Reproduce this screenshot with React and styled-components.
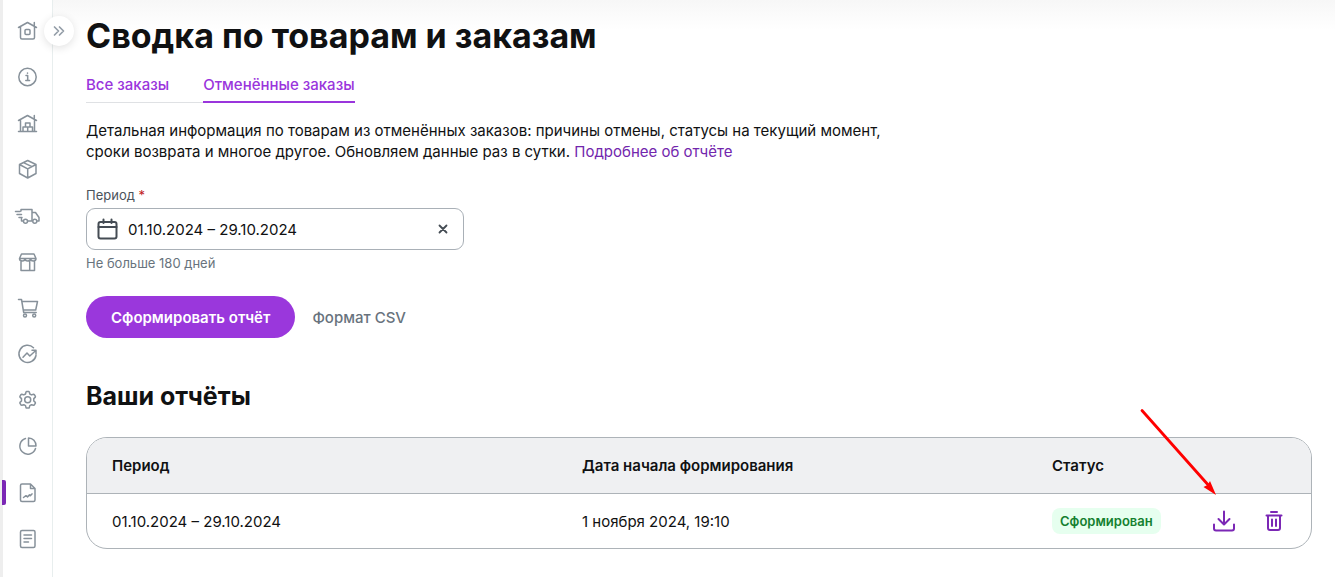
import React, { useState } from "react";
import styled, { createGlobalStyle } from "styled-components";

const GlobalStyle = createGlobalStyle`
  *, *::before, *::after { box-sizing: border-box; }
  body {
    margin: 0;
    background: #fff;
    color: #101112;
    font-family: Inter, "Liberation Sans", sans-serif;
    font-size: 15px;
    font-weight: 400;
    line-height: 21px;
  }
  button, input { font: inherit; color: inherit; }
`;

const Page = styled.div`
  display: flex;
  min-height: 100vh;
`;

const Sidebar = styled.aside`
  position: relative;
  flex: none;
  width: 53px;
  padding-top: 8px;
  border-left: 3px solid #eeeeee;
  border-right: 1px solid #e8eeee;
`;

const NavItem = styled.a`
  position: relative;
  display: flex;
  align-items: center;
  justify-content: center;
  height: 46px;
  color: #87919a;

  &::before {
    content: "";
    display: ${(p) => (p.$active ? "block" : "none")};
    position: absolute;
    left: -1px;
    top: 12px;
    width: 4px;
    height: 25px;
    border-radius: 0 2px 2px 0;
    background: #7b27b5;
  }
`;

const Expand = styled.button`
  position: absolute;
  left: 41px;
  top: 16px;
  display: flex;
  align-items: center;
  justify-content: center;
  width: 30px;
  height: 30px;
  padding: 0;
  border: 0;
  border-radius: 50%;
  background: #fff;
  color: #949ea8;
  box-shadow: 0 2px 8px rgba(0, 0, 0, 0.12);
`;

const Icon = styled.svg`
  flex: none;
  fill: none;
  stroke: currentColor;
  stroke-width: ${(p) => p.$weight || 1.3};
  stroke-linecap: round;
  stroke-linejoin: round;
  overflow: visible;
`;

const Main = styled.main`
  flex: 1;
  min-width: 0;
  padding: 14px 23px 28px 33px;
  background: linear-gradient(#f7f7f7, #fff 30px);
`;

const Title = styled.h1`
  margin: 0;
  font-size: 34px;
  line-height: 44px;
  font-weight: 700;
`;

const Tabs = styled.nav`
  display: flex;
  width: fit-content;
  gap: 34px;
  margin-top: 16px;
  box-shadow: inset 0 -1px #dfe1e4;
`;

const Tab = styled.a`
  padding-bottom: 6px;
  border-bottom: 2px solid ${(p) => (p.$active ? "#9a35dc" : "transparent")};
  color: #9a35dc;
  font-weight: 500;
  text-decoration: none;
`;

const Description = styled.p`
  max-width: 810px;
  margin: 17px 0 0;
`;

const Link = styled.a`
  color: #7226ad;
  text-decoration: none;
`;

const Field = styled.div`
  display: flex;
  flex-direction: column;
  max-width: 378px;
  margin-top: 24px;
`;

const Label = styled.label`
  color: #4b535b;
  font-size: 13px;
  line-height: 18px;
`;

const Required = styled.span`
  color: #c01922;
`;

const InputBox = styled.div`
  display: flex;
  align-items: center;
  gap: 10px;
  height: 42px;
  margin: 4px 0;
  padding: 0 10px;
  border: 1px solid #a9b0b7;
  border-radius: 9px;
  color: #454c54;
`;

const DateInput = styled.input`
  flex: 1;
  min-width: 0;
  padding: 0;
  border: 0;
  outline: 0;
  background: transparent;
  color: #101112;
`;

const Hint = styled.span`
  color: #68737d;
  font-size: 13px;
  line-height: 18px;
`;

const Actions = styled.div`
  display: flex;
  align-items: center;
  gap: 17px;
  margin-top: 24px;
`;

const PrimaryButton = styled.button`
  height: 42px;
  padding: 0 25px;
  border: 0;
  border-radius: 21px;
  background: #9a37dc;
  color: #fff;
  font-weight: 600;
`;

const Format = styled.span`
  color: #68737d;
  font-weight: 500;
`;

const SectionTitle = styled.h2`
  margin: 42px 0 25px;
  font-size: 25px;
  line-height: 32px;
  font-weight: 700;
`;

const TableArea = styled.div`
  position: relative;
`;

const Table = styled.table`
  width: 100%;
  table-layout: fixed;
  border: 1px solid #adb3b8;
  border-radius: 21px;
  border-spacing: 0;
  overflow: hidden;
`;

const Th = styled.th`
  width: ${(p) => p.$width};
  height: 56px;
  padding: 0 25px;
  border-bottom: 1px solid #adb3b8;
  background: #eff0f2;
  font-weight: 600;
  text-align: left;
`;

const Td = styled.td`
  height: 54px;
  padding: 0 25px;
`;

const Status = styled.span`
  display: inline-block;
  padding: 3px 8px;
  border-radius: 8px;
  background: #e6ffef;
  color: #14802f;
  font-size: 13px;
  line-height: 20px;
  font-weight: 600;
`;

const RowActions = styled.div`
  display: flex;
  justify-content: flex-end;
  gap: 26px;
`;

const IconButton = styled.button`
  display: flex;
  padding: 0;
  border: 0;
  background: none;
  color: ${(p) => (p.$muted ? "#454c54" : "#7b27b5")};
`;

const Arrow = styled.svg`
  position: absolute;
  top: -29px;
  right: 94px;
  pointer-events: none;
`;

const navIcons = [
  {
    label: "Главная",
    art: (
      <>
        <path d="M3.5 8.5 12.5 3.5l9 5M19.3 7V3.5M5.5 8v10.5a1.5 1.5 0 0 0 1.5 1.5h11a1.5 1.5 0 0 0 1.5-1.5V8" />
        <rect x="10" y="10.5" width="5" height="5" rx="1" />
      </>
    ),
  },
  {
    label: "Информация",
    art: (
      <>
        <circle cx="12.5" cy="12" r="8.7" />
        <path d="M11 10.5h1.7v5M10.8 15.5h3.8M12.5 8v.3" />
      </>
    ),
  },
  {
    label: "Склад",
    art: (
      <path d="M3.5 9.500 12.500 4.500l9 5M19.300 8V4.500M5.500 9.500v11M19.500 9.500v11M3.500 20.500h18M10.500 16v-4h4.500v4M8 20.500V16h9.500v4.500M12.700 16v4.500" />
    ),
  },
  {
    label: "Товары",
    art: (
      <path d="m12.700 3.500 8.300 4v9l-8.300 4.500-8.200-4.500v-9zM4.500 7.500l8.200 4.300L21 7.500M12.700 11.800V21M8.500 5.600l8.400 4" />
    ),
  },
  {
    label: "Поставки",
    art: (
      <>
        <path d="M6 8V6.500h11V18M17 9.500h3.500l3.500 5V18h-1.500M6.500 15.500V18H8M13 18h4M.5 8.500H5M2 11.500h4.500M4 14.500h3" />
        <circle cx="10.500" cy="18.200" r="2" />
        <circle cx="19.800" cy="18.200" r="2" />
      </>
    ),
  },
  {
    label: "Магазин",
    art: (
      <path d="M6.500 5h12.500l2 4.500H4.500zM4.500 9.500c0 3.300 5.500 3.300 5.500 0 0 3.300 5.500 3.300 5.500 0 0 3.300 5.500 3.300 5.500 0M6 12v9.500h13.500V12M14.700 12v9.500" />
    ),
  },
  {
    label: "Заказы",
    art: (
      <>
        <path d="M3.500 4.500h3l2.200 13h12.500M7.200 6.500h15.300l-1.800 8.500H8.500" />
        <circle cx="10" cy="20.500" r="1.500" />
        <circle cx="19.200" cy="20.500" r="1.500" />
      </>
    ),
  },
  {
    label: "Продвижение",
    art: (
      <path d="M21 14.500A8.600 8.600 0 1 1 18.500 6.700M8 16.200l4-4.200 2.800 3 6-5.500M17 9.300h4v4" />
    ),
  },
  {
    label: "Настройки",
    art: (
      <>
        <path d="m11 5 .5-.5h2.300l.5.500.5 2 1.700.9 2-.7.700.2 1.200 2-.1.700-1.500 1.500v2.400l1.500 1.400.1.700-1.200 2-.7.200-2-.6-1.700.9-.5 2-.5.500h-2.300l-.5-.5-.5-2-1.700-.9-2 .6-.7-.2-1.200-2 .1-.7 1.500-1.400v-2.400L5 10.100l-.1-.7 1.200-2 .7-.2 2 .7 1.700-.9z" />
        <circle cx="12.700" cy="12.800" r="3" />
      </>
    ),
  },
  {
    label: "Статистика",
    art: (
      <path d="M10.500 5.500a8 8 0 1 0 10 10M13.500 5v8h7.500c0-4.500-3-8-7.500-8z" />
    ),
  },
  {
    label: "Отчёты",
    active: true,
    art: (
      <path d="M15.500 5H7a1.500 1.500 0 0 0-1.500 1.500v14.500A1.500 1.500 0 0 0 7 22.500h11.500A1.500 1.500 0 0 0 20 21V9.500zM15.500 5v4.500H20M8.500 18.500l2.500-1.800 1.500 1.200 2-2 .8.800 1.700-1.800" />
    ),
  },
  {
    label: "Документы",
    art: (
      <>
        <rect x="5.500" y="5.500" width="14.500" height="17" rx="1.500" />
        <path d="M9 10h7.500M9 13.500h7.500M9 17h4.500" />
      </>
    ),
  },
];

export default function App() {
  const [period, setPeriod] = useState("01.10.2024 – 29.10.2024");

  return (
    <>
      <GlobalStyle />
      <Page>
        <Sidebar>
          {navIcons.map(({ label, art, active }) => (
            <NavItem key={label} href="#" aria-label={label} $active={active}>
              <Icon width="25" height="24" viewBox="0 0 25 24" $weight={1.5}>{art}</Icon>
            </NavItem>
          ))}
          <Expand type="button" aria-label="Развернуть меню">
            <Icon width="12" height="10" viewBox="0 0 12 10" $weight={1.7}>
              <path d="m1.500 1 4 4-4 4M6.500 1l4 4-4 4" />
            </Icon>
          </Expand>
        </Sidebar>
        <Main>
          <Title>Сводка по товарам и заказам</Title>
          <Tabs>
            <Tab href="#">Все заказы</Tab>
            <Tab href="#" $active aria-current="page">Отменённые заказы</Tab>
          </Tabs>
          <Description>
            Детальная информация по товарам из отменённых заказов: причины отмены, статусы на текущий момент,{" "}
            <br />
            сроки возврата и многое другое. Обновляем данные раз в сутки. <Link href="#">Подробнее об отчёте</Link>
          </Description>
          <Field>
            <Label htmlFor="period">Период <Required>*</Required></Label>
            <InputBox>
              <Icon width="21" height="22" viewBox="0 0 21 22" $weight={2}>
                <rect x="1.500" y="4" width="18" height="16.500" rx="2" />
                <path d="M1.500 9h18M6.500 1.500V5M14.500 1.500V5" />
              </Icon>
              <DateInput id="period" value={period} onChange={(e) => setPeriod(e.target.value)} />
              <IconButton $muted type="button" aria-label="Очистить" onClick={() => setPeriod("")}>
                <Icon width="20" height="20" viewBox="0 0 20 20" $weight={1.8}>
                  <path d="m6.500 6.500 7 7M13.500 6.500l-7 7" />
                </Icon>
              </IconButton>
            </InputBox>
            <Hint>Не больше 180 дней</Hint>
          </Field>
          <Actions>
            <PrimaryButton type="button">Сформировать отчёт</PrimaryButton>
            <Format>Формат CSV</Format>
          </Actions>
          <SectionTitle>Ваши отчёты</SectionTitle>
          <TableArea>
            <Table>
              <thead>
                <tr>
                  <Th $width="38.4%">Период</Th>
                  <Th $width="38.4%">Дата начала формирования</Th>
                  <Th $width="12.8%">Статус</Th>
                  <Th aria-label="Действия" />
                </tr>
              </thead>
              <tbody>
                <tr>
                  <Td>01.10.2024 – 29.10.2024</Td>
                  <Td>1 ноября 2024, 19:10</Td>
                  <Td><Status>Сформирован</Status></Td>
                  <Td>
                    <RowActions>
                      <IconButton type="button" aria-label="Скачать">
                        <Icon width="24" height="24" viewBox="0 0 24 24" $weight={2}>
                          <path d="M12 2.500V15M6.500 10l5.500 5.500 5.500-5.500M2 15.500v4a2 2 0 0 0 2 2h16a2 2 0 0 0 2-2v-4" />
                        </Icon>
                      </IconButton>
                      <IconButton type="button" aria-label="Удалить">
                        <Icon width="24" height="24" viewBox="0 0 24 24" $weight={2}>
                          <path d="M9 3h6M4.500 6.500h15M6 6.500V19a2 2 0 0 0 2 2h8a2 2 0 0 0 2-2V6.500M10 10.500v6.500M14 10.500v6.500" />
                        </Icon>
                      </IconButton>
                    </RowActions>
                  </Td>
                </tr>
              </tbody>
            </Table>
            <Arrow width="78" height="88" viewBox="0 0 78 88">
              <path d="M2 2.500 70 79" stroke="#ff0000" strokeWidth="2.800" strokeLinecap="round" />
              <path d="m76 87-12.500-8 4-2 2.500-4z" fill="#ff0000" />
            </Arrow>
          </TableArea>
        </Main>
      </Page>
    </>
  );
}
